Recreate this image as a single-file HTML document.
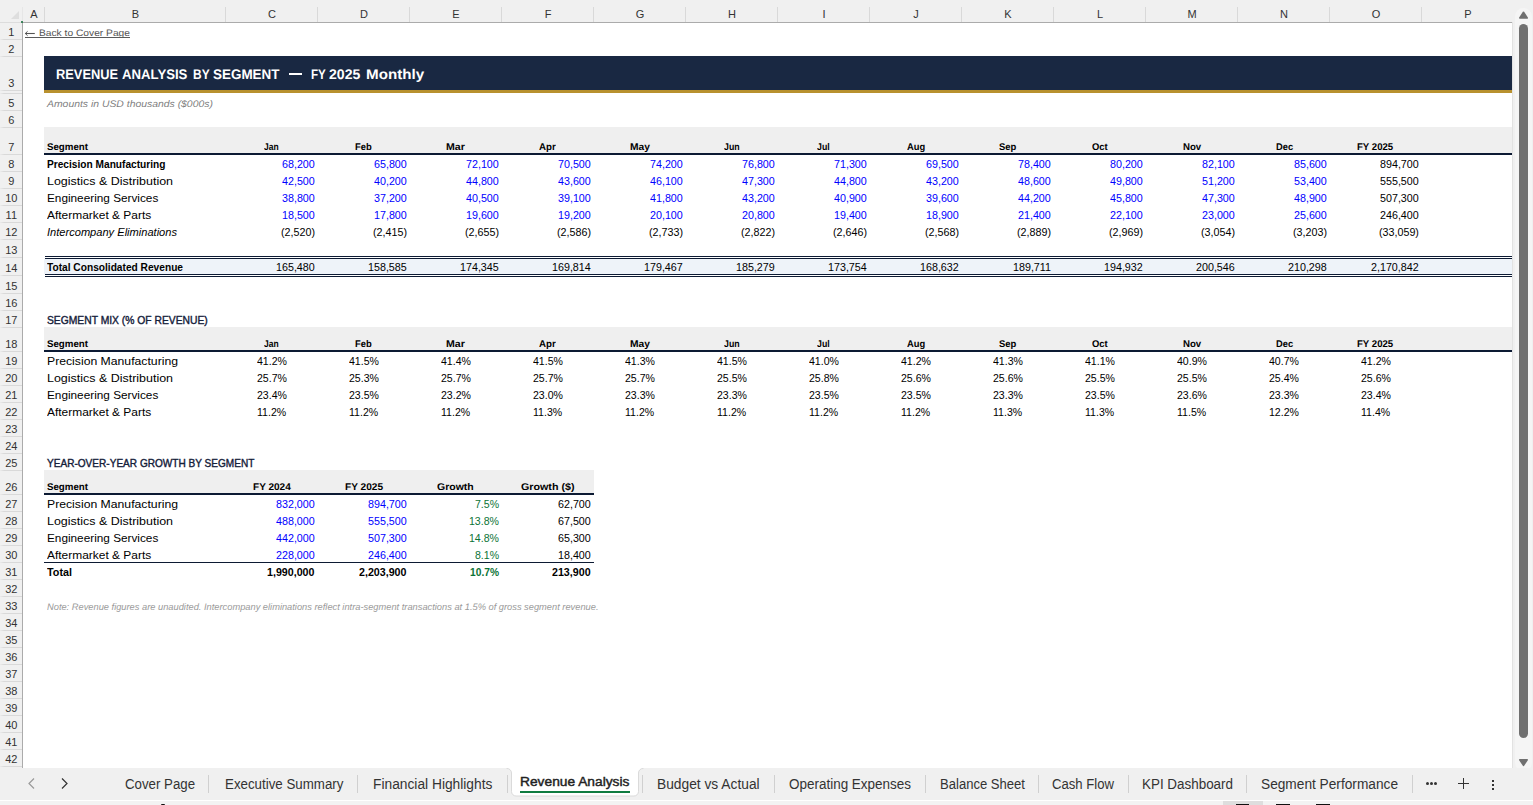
<!DOCTYPE html>
<html><head><meta charset="utf-8"><style>
html,body{margin:0;padding:0;}
body{width:1533px;height:805px;overflow:hidden;position:relative;background:#fff;font-family:"Liberation Sans",sans-serif;}
.t{position:absolute;white-space:pre;line-height:normal;transform-origin:0 0;}
.r{position:absolute;}
</style></head><body>
<div class="r" style="left:0px;top:0px;width:1533px;height:805px;background:#ffffff;"></div>
<div class="r" style="left:44px;top:56px;width:1468px;height:34px;background:#192842;"></div>
<div class="r" style="left:44px;top:90px;width:1468px;height:3px;background:#b8912f;"></div>
<div class="t" style="left:55.80px;top:66.33px;font-size:14px;font-weight:bold;color:#ffffff;transform:scaleX(0.9173);text-rendering:geometricPrecision;">REVENUE</div>
<div class="t" style="left:122.20px;top:66.33px;font-size:14px;font-weight:bold;color:#ffffff;transform:scaleX(0.9410);text-rendering:geometricPrecision;">ANALYSIS</div>
<div class="t" style="left:192.60px;top:66.33px;font-size:14px;font-weight:bold;color:#ffffff;transform:scaleX(0.8535);text-rendering:geometricPrecision;">BY</div>
<div class="t" style="left:213.10px;top:66.33px;font-size:14px;font-weight:bold;color:#ffffff;transform:scaleX(0.9603);text-rendering:geometricPrecision;">SEGMENT</div>
<div class="t" style="left:310.60px;top:66.33px;font-size:14px;font-weight:bold;color:#ffffff;transform:scaleX(0.8268);text-rendering:geometricPrecision;">FY</div>
<div class="t" style="left:329.30px;top:66.33px;font-size:14px;font-weight:bold;color:#ffffff;transform:scaleX(1.0048);text-rendering:geometricPrecision;">2025</div>
<div class="t" style="left:365.70px;top:66.33px;font-size:14px;font-weight:bold;color:#ffffff;transform:scaleX(1.0829);text-rendering:geometricPrecision;">Monthly</div>
<div class="r" style="left:289px;top:73.4px;width:13px;height:1.4px;background:#ffffff;"></div>
<div class="t" style="left:38.80px;top:27.49px;font-size:9.4px;font-weight:normal;font-style:normal;color:#555555;transform:scaleX(1.0909);text-rendering:geometricPrecision;">Back to Cover Page</div>
<div class="r" style="left:25px;top:37px;width:105px;height:1px;background:#5a5a5a;"></div>
<svg class="r" style="left:24px;top:29px" width="14" height="9"><path d="M1.2 4.5 L10.8 4.5" stroke="#555" stroke-width="1.1" fill="none"/><path d="M3.6 2.3 L1.3 4.5 L3.6 6.7" stroke="#555" stroke-width="1" fill="none"/></svg>
<div class="t" style="left:47.00px;top:99.31px;font-size:9.6px;font-weight:normal;font-style:italic;color:#7f7f7f;transform:scaleX(1.0839);text-rendering:geometricPrecision;">Amounts in USD thousands ($000s)</div>
<div class="r" style="left:44px;top:127px;width:1468px;height:26px;background:#efefef;"></div>
<div class="r" style="left:44px;top:153px;width:1468px;height:2px;background:#0c1a33;"></div>
<div class="t" style="left:47.00px;top:142.18px;font-size:9.75px;font-weight:bold;font-style:normal;color:#000000;transform:scaleX(0.9957);text-rendering:geometricPrecision;">Segment</div>
<div class="t" style="left:264.20px;top:142.18px;font-size:9.75px;font-weight:bold;color:#000000;transform:scaleX(0.8690);text-rendering:geometricPrecision;">Jan</div>
<div class="t" style="left:355.00px;top:142.18px;font-size:9.75px;font-weight:bold;color:#000000;transform:scaleX(0.9625);text-rendering:geometricPrecision;">Feb</div>
<div class="t" style="left:446.20px;top:142.18px;font-size:9.75px;font-weight:bold;color:#000000;transform:scaleX(1.0836);text-rendering:geometricPrecision;">Mar</div>
<div class="t" style="left:539.10px;top:142.18px;font-size:9.75px;font-weight:bold;color:#000000;transform:scaleX(0.9940);text-rendering:geometricPrecision;">Apr</div>
<div class="t" style="left:630.40px;top:142.18px;font-size:9.75px;font-weight:bold;color:#000000;transform:scaleX(1.0501);text-rendering:geometricPrecision;">May</div>
<div class="t" style="left:724.00px;top:142.18px;font-size:9.75px;font-weight:bold;color:#000000;transform:scaleX(0.8991);text-rendering:geometricPrecision;">Jun</div>
<div class="t" style="left:816.70px;top:142.18px;font-size:9.75px;font-weight:bold;color:#000000;transform:scaleX(0.9007);text-rendering:geometricPrecision;">Jul</div>
<div class="t" style="left:907.00px;top:142.18px;font-size:9.75px;font-weight:bold;color:#000000;transform:scaleX(0.9604);text-rendering:geometricPrecision;">Aug</div>
<div class="t" style="left:998.80px;top:142.18px;font-size:9.75px;font-weight:bold;color:#000000;transform:scaleX(0.9665);text-rendering:geometricPrecision;">Sep</div>
<div class="t" style="left:1092.30px;top:142.18px;font-size:9.75px;font-weight:bold;color:#000000;transform:scaleX(0.9662);text-rendering:geometricPrecision;">Oct</div>
<div class="t" style="left:1183.10px;top:142.18px;font-size:9.75px;font-weight:bold;color:#000000;transform:scaleX(0.9891);text-rendering:geometricPrecision;">Nov</div>
<div class="t" style="left:1275.60px;top:142.18px;font-size:9.75px;font-weight:bold;color:#000000;transform:scaleX(0.9553);text-rendering:geometricPrecision;">Dec</div>
<div class="t" style="left:1357.30px;top:142.18px;font-size:9.75px;font-weight:bold;color:#000000;transform:scaleX(0.9864);text-rendering:geometricPrecision;">FY 2025</div>
<div class="t" style="left:47.00px;top:158.04px;font-size:11px;font-weight:bold;font-style:normal;color:#000000;transform:scaleX(0.9232);">Precision Manufacturing</div>
<div class="t" style="left:281.70px;top:158.04px;font-size:11px;font-weight:normal;font-style:normal;color:#0000ff;transform:scaleX(0.9750);">68,200</div>
<div class="t" style="left:373.70px;top:158.04px;font-size:11px;font-weight:normal;font-style:normal;color:#0000ff;transform:scaleX(0.9750);">65,800</div>
<div class="t" style="left:465.70px;top:158.04px;font-size:11px;font-weight:normal;font-style:normal;color:#0000ff;transform:scaleX(0.9750);">72,100</div>
<div class="t" style="left:557.70px;top:158.04px;font-size:11px;font-weight:normal;font-style:normal;color:#0000ff;transform:scaleX(0.9750);">70,500</div>
<div class="t" style="left:649.70px;top:158.04px;font-size:11px;font-weight:normal;font-style:normal;color:#0000ff;transform:scaleX(0.9750);">74,200</div>
<div class="t" style="left:741.70px;top:158.04px;font-size:11px;font-weight:normal;font-style:normal;color:#0000ff;transform:scaleX(0.9750);">76,800</div>
<div class="t" style="left:833.70px;top:158.04px;font-size:11px;font-weight:normal;font-style:normal;color:#0000ff;transform:scaleX(0.9750);">71,300</div>
<div class="t" style="left:925.70px;top:158.04px;font-size:11px;font-weight:normal;font-style:normal;color:#0000ff;transform:scaleX(0.9750);">69,500</div>
<div class="t" style="left:1017.70px;top:158.04px;font-size:11px;font-weight:normal;font-style:normal;color:#0000ff;transform:scaleX(0.9750);">78,400</div>
<div class="t" style="left:1109.70px;top:158.04px;font-size:11px;font-weight:normal;font-style:normal;color:#0000ff;transform:scaleX(0.9750);">80,200</div>
<div class="t" style="left:1201.70px;top:158.04px;font-size:11px;font-weight:normal;font-style:normal;color:#0000ff;transform:scaleX(0.9750);">82,100</div>
<div class="t" style="left:1293.70px;top:158.04px;font-size:11px;font-weight:normal;font-style:normal;color:#0000ff;transform:scaleX(0.9750);">85,600</div>
<div class="t" style="left:1379.73px;top:158.04px;font-size:11px;font-weight:normal;font-style:normal;color:#000000;transform:scaleX(0.9750);">894,700</div>
<div class="t" style="left:47.00px;top:175.04px;font-size:11px;font-weight:normal;font-style:normal;color:#000000;transform:scaleX(1.1324);">Logistics &amp; Distribution</div>
<div class="t" style="left:281.70px;top:175.04px;font-size:11px;font-weight:normal;font-style:normal;color:#0000ff;transform:scaleX(0.9750);">42,500</div>
<div class="t" style="left:373.70px;top:175.04px;font-size:11px;font-weight:normal;font-style:normal;color:#0000ff;transform:scaleX(0.9750);">40,200</div>
<div class="t" style="left:465.70px;top:175.04px;font-size:11px;font-weight:normal;font-style:normal;color:#0000ff;transform:scaleX(0.9750);">44,800</div>
<div class="t" style="left:557.70px;top:175.04px;font-size:11px;font-weight:normal;font-style:normal;color:#0000ff;transform:scaleX(0.9750);">43,600</div>
<div class="t" style="left:649.70px;top:175.04px;font-size:11px;font-weight:normal;font-style:normal;color:#0000ff;transform:scaleX(0.9750);">46,100</div>
<div class="t" style="left:741.70px;top:175.04px;font-size:11px;font-weight:normal;font-style:normal;color:#0000ff;transform:scaleX(0.9750);">47,300</div>
<div class="t" style="left:833.70px;top:175.04px;font-size:11px;font-weight:normal;font-style:normal;color:#0000ff;transform:scaleX(0.9750);">44,800</div>
<div class="t" style="left:925.70px;top:175.04px;font-size:11px;font-weight:normal;font-style:normal;color:#0000ff;transform:scaleX(0.9750);">43,200</div>
<div class="t" style="left:1017.70px;top:175.04px;font-size:11px;font-weight:normal;font-style:normal;color:#0000ff;transform:scaleX(0.9750);">48,600</div>
<div class="t" style="left:1109.70px;top:175.04px;font-size:11px;font-weight:normal;font-style:normal;color:#0000ff;transform:scaleX(0.9750);">49,800</div>
<div class="t" style="left:1201.70px;top:175.04px;font-size:11px;font-weight:normal;font-style:normal;color:#0000ff;transform:scaleX(0.9750);">51,200</div>
<div class="t" style="left:1293.70px;top:175.04px;font-size:11px;font-weight:normal;font-style:normal;color:#0000ff;transform:scaleX(0.9750);">53,400</div>
<div class="t" style="left:1379.73px;top:175.04px;font-size:11px;font-weight:normal;font-style:normal;color:#000000;transform:scaleX(0.9750);">555,500</div>
<div class="t" style="left:47.00px;top:192.04px;font-size:11px;font-weight:normal;font-style:normal;color:#000000;transform:scaleX(1.0707);">Engineering Services</div>
<div class="t" style="left:281.70px;top:192.04px;font-size:11px;font-weight:normal;font-style:normal;color:#0000ff;transform:scaleX(0.9750);">38,800</div>
<div class="t" style="left:373.70px;top:192.04px;font-size:11px;font-weight:normal;font-style:normal;color:#0000ff;transform:scaleX(0.9750);">37,200</div>
<div class="t" style="left:465.70px;top:192.04px;font-size:11px;font-weight:normal;font-style:normal;color:#0000ff;transform:scaleX(0.9750);">40,500</div>
<div class="t" style="left:557.70px;top:192.04px;font-size:11px;font-weight:normal;font-style:normal;color:#0000ff;transform:scaleX(0.9750);">39,100</div>
<div class="t" style="left:649.70px;top:192.04px;font-size:11px;font-weight:normal;font-style:normal;color:#0000ff;transform:scaleX(0.9750);">41,800</div>
<div class="t" style="left:741.70px;top:192.04px;font-size:11px;font-weight:normal;font-style:normal;color:#0000ff;transform:scaleX(0.9750);">43,200</div>
<div class="t" style="left:833.70px;top:192.04px;font-size:11px;font-weight:normal;font-style:normal;color:#0000ff;transform:scaleX(0.9750);">40,900</div>
<div class="t" style="left:925.70px;top:192.04px;font-size:11px;font-weight:normal;font-style:normal;color:#0000ff;transform:scaleX(0.9750);">39,600</div>
<div class="t" style="left:1017.70px;top:192.04px;font-size:11px;font-weight:normal;font-style:normal;color:#0000ff;transform:scaleX(0.9750);">44,200</div>
<div class="t" style="left:1109.70px;top:192.04px;font-size:11px;font-weight:normal;font-style:normal;color:#0000ff;transform:scaleX(0.9750);">45,800</div>
<div class="t" style="left:1201.70px;top:192.04px;font-size:11px;font-weight:normal;font-style:normal;color:#0000ff;transform:scaleX(0.9750);">47,300</div>
<div class="t" style="left:1293.70px;top:192.04px;font-size:11px;font-weight:normal;font-style:normal;color:#0000ff;transform:scaleX(0.9750);">48,900</div>
<div class="t" style="left:1379.73px;top:192.04px;font-size:11px;font-weight:normal;font-style:normal;color:#000000;transform:scaleX(0.9750);">507,300</div>
<div class="t" style="left:47.00px;top:209.04px;font-size:11px;font-weight:normal;font-style:normal;color:#000000;transform:scaleX(1.0857);">Aftermarket &amp; Parts</div>
<div class="t" style="left:281.70px;top:209.04px;font-size:11px;font-weight:normal;font-style:normal;color:#0000ff;transform:scaleX(0.9750);">18,500</div>
<div class="t" style="left:373.70px;top:209.04px;font-size:11px;font-weight:normal;font-style:normal;color:#0000ff;transform:scaleX(0.9750);">17,800</div>
<div class="t" style="left:465.70px;top:209.04px;font-size:11px;font-weight:normal;font-style:normal;color:#0000ff;transform:scaleX(0.9750);">19,600</div>
<div class="t" style="left:557.70px;top:209.04px;font-size:11px;font-weight:normal;font-style:normal;color:#0000ff;transform:scaleX(0.9750);">19,200</div>
<div class="t" style="left:649.70px;top:209.04px;font-size:11px;font-weight:normal;font-style:normal;color:#0000ff;transform:scaleX(0.9750);">20,100</div>
<div class="t" style="left:741.70px;top:209.04px;font-size:11px;font-weight:normal;font-style:normal;color:#0000ff;transform:scaleX(0.9750);">20,800</div>
<div class="t" style="left:833.70px;top:209.04px;font-size:11px;font-weight:normal;font-style:normal;color:#0000ff;transform:scaleX(0.9750);">19,400</div>
<div class="t" style="left:925.70px;top:209.04px;font-size:11px;font-weight:normal;font-style:normal;color:#0000ff;transform:scaleX(0.9750);">18,900</div>
<div class="t" style="left:1017.70px;top:209.04px;font-size:11px;font-weight:normal;font-style:normal;color:#0000ff;transform:scaleX(0.9750);">21,400</div>
<div class="t" style="left:1109.70px;top:209.04px;font-size:11px;font-weight:normal;font-style:normal;color:#0000ff;transform:scaleX(0.9750);">22,100</div>
<div class="t" style="left:1201.70px;top:209.04px;font-size:11px;font-weight:normal;font-style:normal;color:#0000ff;transform:scaleX(0.9750);">23,000</div>
<div class="t" style="left:1293.70px;top:209.04px;font-size:11px;font-weight:normal;font-style:normal;color:#0000ff;transform:scaleX(0.9750);">25,600</div>
<div class="t" style="left:1379.73px;top:209.04px;font-size:11px;font-weight:normal;font-style:normal;color:#000000;transform:scaleX(0.9750);">246,400</div>
<div class="t" style="left:47.00px;top:226.04px;font-size:11px;font-weight:normal;font-style:italic;color:#000000;transform:scaleX(1.0077);">Intercompany Eliminations</div>
<div class="t" style="left:280.52px;top:226.04px;font-size:11px;font-weight:normal;font-style:normal;color:#000000;transform:scaleX(0.9750);">(2,520)</div>
<div class="t" style="left:372.52px;top:226.04px;font-size:11px;font-weight:normal;font-style:normal;color:#000000;transform:scaleX(0.9750);">(2,415)</div>
<div class="t" style="left:464.52px;top:226.04px;font-size:11px;font-weight:normal;font-style:normal;color:#000000;transform:scaleX(0.9750);">(2,655)</div>
<div class="t" style="left:556.52px;top:226.04px;font-size:11px;font-weight:normal;font-style:normal;color:#000000;transform:scaleX(0.9750);">(2,586)</div>
<div class="t" style="left:648.52px;top:226.04px;font-size:11px;font-weight:normal;font-style:normal;color:#000000;transform:scaleX(0.9750);">(2,733)</div>
<div class="t" style="left:740.52px;top:226.04px;font-size:11px;font-weight:normal;font-style:normal;color:#000000;transform:scaleX(0.9750);">(2,822)</div>
<div class="t" style="left:832.52px;top:226.04px;font-size:11px;font-weight:normal;font-style:normal;color:#000000;transform:scaleX(0.9750);">(2,646)</div>
<div class="t" style="left:924.52px;top:226.04px;font-size:11px;font-weight:normal;font-style:normal;color:#000000;transform:scaleX(0.9750);">(2,568)</div>
<div class="t" style="left:1016.52px;top:226.04px;font-size:11px;font-weight:normal;font-style:normal;color:#000000;transform:scaleX(0.9750);">(2,889)</div>
<div class="t" style="left:1108.52px;top:226.04px;font-size:11px;font-weight:normal;font-style:normal;color:#000000;transform:scaleX(0.9750);">(2,969)</div>
<div class="t" style="left:1200.52px;top:226.04px;font-size:11px;font-weight:normal;font-style:normal;color:#000000;transform:scaleX(0.9750);">(3,054)</div>
<div class="t" style="left:1292.52px;top:226.04px;font-size:11px;font-weight:normal;font-style:normal;color:#000000;transform:scaleX(0.9750);">(3,203)</div>
<div class="t" style="left:1378.55px;top:226.04px;font-size:11px;font-weight:normal;font-style:normal;color:#000000;transform:scaleX(0.9750);">(33,059)</div>
<div class="r" style="left:44px;top:259px;width:1468px;height:15px;background:#eef3f9;"></div>
<div class="r" style="left:45px;top:256px;width:1467px;height:1px;background:#0c1a33;"></div>
<div class="r" style="left:45px;top:258px;width:1467px;height:1px;background:#0c1a33;"></div>
<div class="r" style="left:45px;top:274px;width:1467px;height:1px;background:#0c1a33;"></div>
<div class="r" style="left:45px;top:276px;width:1467px;height:1px;background:#0c1a33;"></div>
<div class="t" style="left:47.00px;top:261.05px;font-size:11px;font-weight:bold;font-style:normal;color:#000000;transform:scaleX(0.9246);">Total Consolidated Revenue</div>
<div class="t" style="left:275.73px;top:261.05px;font-size:11px;font-weight:normal;font-style:normal;color:#000000;transform:scaleX(0.9750);">165,480</div>
<div class="t" style="left:367.73px;top:261.05px;font-size:11px;font-weight:normal;font-style:normal;color:#000000;transform:scaleX(0.9750);">158,585</div>
<div class="t" style="left:459.73px;top:261.05px;font-size:11px;font-weight:normal;font-style:normal;color:#000000;transform:scaleX(0.9750);">174,345</div>
<div class="t" style="left:551.73px;top:261.05px;font-size:11px;font-weight:normal;font-style:normal;color:#000000;transform:scaleX(0.9750);">169,814</div>
<div class="t" style="left:643.73px;top:261.05px;font-size:11px;font-weight:normal;font-style:normal;color:#000000;transform:scaleX(0.9750);">179,467</div>
<div class="t" style="left:735.73px;top:261.05px;font-size:11px;font-weight:normal;font-style:normal;color:#000000;transform:scaleX(0.9750);">185,279</div>
<div class="t" style="left:827.73px;top:261.05px;font-size:11px;font-weight:normal;font-style:normal;color:#000000;transform:scaleX(0.9750);">173,754</div>
<div class="t" style="left:919.73px;top:261.05px;font-size:11px;font-weight:normal;font-style:normal;color:#000000;transform:scaleX(0.9750);">168,632</div>
<div class="t" style="left:1012.53px;top:261.05px;font-size:11px;font-weight:normal;font-style:normal;color:#000000;transform:scaleX(0.9750);">189,711</div>
<div class="t" style="left:1103.73px;top:261.05px;font-size:11px;font-weight:normal;font-style:normal;color:#000000;transform:scaleX(0.9750);">194,932</div>
<div class="t" style="left:1195.73px;top:261.05px;font-size:11px;font-weight:normal;font-style:normal;color:#000000;transform:scaleX(0.9750);">200,546</div>
<div class="t" style="left:1287.73px;top:261.05px;font-size:11px;font-weight:normal;font-style:normal;color:#000000;transform:scaleX(0.9750);">210,298</div>
<div class="t" style="left:1370.79px;top:261.05px;font-size:11px;font-weight:normal;font-style:normal;color:#000000;transform:scaleX(0.9750);">2,170,842</div>
<div class="t" style="left:47.00px;top:314.05px;font-size:11px;font-weight:normal;font-style:normal;color:#14203a;transform:scaleX(0.9368);-webkit-text-stroke:0.4px #14203a;">SEGMENT MIX (% OF REVENUE)</div>
<div class="r" style="left:44px;top:327px;width:1468px;height:23px;background:#efefef;"></div>
<div class="r" style="left:44px;top:350px;width:1468px;height:2px;background:#0c1a33;"></div>
<div class="t" style="left:47.00px;top:339.18px;font-size:9.75px;font-weight:bold;font-style:normal;color:#000000;transform:scaleX(0.9957);text-rendering:geometricPrecision;">Segment</div>
<div class="t" style="left:264.20px;top:339.18px;font-size:9.75px;font-weight:bold;color:#000000;transform:scaleX(0.8690);text-rendering:geometricPrecision;">Jan</div>
<div class="t" style="left:355.00px;top:339.18px;font-size:9.75px;font-weight:bold;color:#000000;transform:scaleX(0.9625);text-rendering:geometricPrecision;">Feb</div>
<div class="t" style="left:446.20px;top:339.18px;font-size:9.75px;font-weight:bold;color:#000000;transform:scaleX(1.0836);text-rendering:geometricPrecision;">Mar</div>
<div class="t" style="left:539.10px;top:339.18px;font-size:9.75px;font-weight:bold;color:#000000;transform:scaleX(0.9940);text-rendering:geometricPrecision;">Apr</div>
<div class="t" style="left:630.40px;top:339.18px;font-size:9.75px;font-weight:bold;color:#000000;transform:scaleX(1.0501);text-rendering:geometricPrecision;">May</div>
<div class="t" style="left:724.00px;top:339.18px;font-size:9.75px;font-weight:bold;color:#000000;transform:scaleX(0.8991);text-rendering:geometricPrecision;">Jun</div>
<div class="t" style="left:816.70px;top:339.18px;font-size:9.75px;font-weight:bold;color:#000000;transform:scaleX(0.9007);text-rendering:geometricPrecision;">Jul</div>
<div class="t" style="left:907.00px;top:339.18px;font-size:9.75px;font-weight:bold;color:#000000;transform:scaleX(0.9604);text-rendering:geometricPrecision;">Aug</div>
<div class="t" style="left:998.80px;top:339.18px;font-size:9.75px;font-weight:bold;color:#000000;transform:scaleX(0.9665);text-rendering:geometricPrecision;">Sep</div>
<div class="t" style="left:1092.30px;top:339.18px;font-size:9.75px;font-weight:bold;color:#000000;transform:scaleX(0.9662);text-rendering:geometricPrecision;">Oct</div>
<div class="t" style="left:1183.10px;top:339.18px;font-size:9.75px;font-weight:bold;color:#000000;transform:scaleX(0.9891);text-rendering:geometricPrecision;">Nov</div>
<div class="t" style="left:1275.60px;top:339.18px;font-size:9.75px;font-weight:bold;color:#000000;transform:scaleX(0.9553);text-rendering:geometricPrecision;">Dec</div>
<div class="t" style="left:1357.30px;top:339.18px;font-size:9.75px;font-weight:bold;color:#000000;transform:scaleX(0.9864);text-rendering:geometricPrecision;">FY 2025</div>
<div class="t" style="left:47.00px;top:355.05px;font-size:11px;font-weight:normal;font-style:normal;color:#000000;transform:scaleX(1.1101);">Precision Manufacturing</div>
<div class="t" style="left:257.03px;top:355.05px;font-size:11px;font-weight:normal;font-style:normal;color:#000000;transform:scaleX(0.9600);">41.2%</div>
<div class="t" style="left:349.03px;top:355.05px;font-size:11px;font-weight:normal;font-style:normal;color:#000000;transform:scaleX(0.9600);">41.5%</div>
<div class="t" style="left:441.03px;top:355.05px;font-size:11px;font-weight:normal;font-style:normal;color:#000000;transform:scaleX(0.9600);">41.4%</div>
<div class="t" style="left:533.03px;top:355.05px;font-size:11px;font-weight:normal;font-style:normal;color:#000000;transform:scaleX(0.9600);">41.5%</div>
<div class="t" style="left:625.03px;top:355.05px;font-size:11px;font-weight:normal;font-style:normal;color:#000000;transform:scaleX(0.9600);">41.3%</div>
<div class="t" style="left:717.03px;top:355.05px;font-size:11px;font-weight:normal;font-style:normal;color:#000000;transform:scaleX(0.9600);">41.5%</div>
<div class="t" style="left:809.03px;top:355.05px;font-size:11px;font-weight:normal;font-style:normal;color:#000000;transform:scaleX(0.9600);">41.0%</div>
<div class="t" style="left:901.03px;top:355.05px;font-size:11px;font-weight:normal;font-style:normal;color:#000000;transform:scaleX(0.9600);">41.2%</div>
<div class="t" style="left:993.03px;top:355.05px;font-size:11px;font-weight:normal;font-style:normal;color:#000000;transform:scaleX(0.9600);">41.3%</div>
<div class="t" style="left:1085.03px;top:355.05px;font-size:11px;font-weight:normal;font-style:normal;color:#000000;transform:scaleX(0.9600);">41.1%</div>
<div class="t" style="left:1177.03px;top:355.05px;font-size:11px;font-weight:normal;font-style:normal;color:#000000;transform:scaleX(0.9600);">40.9%</div>
<div class="t" style="left:1269.03px;top:355.05px;font-size:11px;font-weight:normal;font-style:normal;color:#000000;transform:scaleX(0.9600);">40.7%</div>
<div class="t" style="left:1361.03px;top:355.05px;font-size:11px;font-weight:normal;font-style:normal;color:#000000;transform:scaleX(0.9600);">41.2%</div>
<div class="t" style="left:47.00px;top:372.05px;font-size:11px;font-weight:normal;font-style:normal;color:#000000;transform:scaleX(1.1324);">Logistics &amp; Distribution</div>
<div class="t" style="left:257.03px;top:372.05px;font-size:11px;font-weight:normal;font-style:normal;color:#000000;transform:scaleX(0.9600);">25.7%</div>
<div class="t" style="left:349.03px;top:372.05px;font-size:11px;font-weight:normal;font-style:normal;color:#000000;transform:scaleX(0.9600);">25.3%</div>
<div class="t" style="left:441.03px;top:372.05px;font-size:11px;font-weight:normal;font-style:normal;color:#000000;transform:scaleX(0.9600);">25.7%</div>
<div class="t" style="left:533.03px;top:372.05px;font-size:11px;font-weight:normal;font-style:normal;color:#000000;transform:scaleX(0.9600);">25.7%</div>
<div class="t" style="left:625.03px;top:372.05px;font-size:11px;font-weight:normal;font-style:normal;color:#000000;transform:scaleX(0.9600);">25.7%</div>
<div class="t" style="left:717.03px;top:372.05px;font-size:11px;font-weight:normal;font-style:normal;color:#000000;transform:scaleX(0.9600);">25.5%</div>
<div class="t" style="left:809.03px;top:372.05px;font-size:11px;font-weight:normal;font-style:normal;color:#000000;transform:scaleX(0.9600);">25.8%</div>
<div class="t" style="left:901.03px;top:372.05px;font-size:11px;font-weight:normal;font-style:normal;color:#000000;transform:scaleX(0.9600);">25.6%</div>
<div class="t" style="left:993.03px;top:372.05px;font-size:11px;font-weight:normal;font-style:normal;color:#000000;transform:scaleX(0.9600);">25.6%</div>
<div class="t" style="left:1085.03px;top:372.05px;font-size:11px;font-weight:normal;font-style:normal;color:#000000;transform:scaleX(0.9600);">25.5%</div>
<div class="t" style="left:1177.03px;top:372.05px;font-size:11px;font-weight:normal;font-style:normal;color:#000000;transform:scaleX(0.9600);">25.5%</div>
<div class="t" style="left:1269.03px;top:372.05px;font-size:11px;font-weight:normal;font-style:normal;color:#000000;transform:scaleX(0.9600);">25.4%</div>
<div class="t" style="left:1361.03px;top:372.05px;font-size:11px;font-weight:normal;font-style:normal;color:#000000;transform:scaleX(0.9600);">25.6%</div>
<div class="t" style="left:47.00px;top:389.05px;font-size:11px;font-weight:normal;font-style:normal;color:#000000;transform:scaleX(1.0707);">Engineering Services</div>
<div class="t" style="left:257.03px;top:389.05px;font-size:11px;font-weight:normal;font-style:normal;color:#000000;transform:scaleX(0.9600);">23.4%</div>
<div class="t" style="left:349.03px;top:389.05px;font-size:11px;font-weight:normal;font-style:normal;color:#000000;transform:scaleX(0.9600);">23.5%</div>
<div class="t" style="left:441.03px;top:389.05px;font-size:11px;font-weight:normal;font-style:normal;color:#000000;transform:scaleX(0.9600);">23.2%</div>
<div class="t" style="left:533.03px;top:389.05px;font-size:11px;font-weight:normal;font-style:normal;color:#000000;transform:scaleX(0.9600);">23.0%</div>
<div class="t" style="left:625.03px;top:389.05px;font-size:11px;font-weight:normal;font-style:normal;color:#000000;transform:scaleX(0.9600);">23.3%</div>
<div class="t" style="left:717.03px;top:389.05px;font-size:11px;font-weight:normal;font-style:normal;color:#000000;transform:scaleX(0.9600);">23.3%</div>
<div class="t" style="left:809.03px;top:389.05px;font-size:11px;font-weight:normal;font-style:normal;color:#000000;transform:scaleX(0.9600);">23.5%</div>
<div class="t" style="left:901.03px;top:389.05px;font-size:11px;font-weight:normal;font-style:normal;color:#000000;transform:scaleX(0.9600);">23.5%</div>
<div class="t" style="left:993.03px;top:389.05px;font-size:11px;font-weight:normal;font-style:normal;color:#000000;transform:scaleX(0.9600);">23.3%</div>
<div class="t" style="left:1085.03px;top:389.05px;font-size:11px;font-weight:normal;font-style:normal;color:#000000;transform:scaleX(0.9600);">23.5%</div>
<div class="t" style="left:1177.03px;top:389.05px;font-size:11px;font-weight:normal;font-style:normal;color:#000000;transform:scaleX(0.9600);">23.6%</div>
<div class="t" style="left:1269.03px;top:389.05px;font-size:11px;font-weight:normal;font-style:normal;color:#000000;transform:scaleX(0.9600);">23.3%</div>
<div class="t" style="left:1361.03px;top:389.05px;font-size:11px;font-weight:normal;font-style:normal;color:#000000;transform:scaleX(0.9600);">23.4%</div>
<div class="t" style="left:47.00px;top:406.05px;font-size:11px;font-weight:normal;font-style:normal;color:#000000;transform:scaleX(1.0857);">Aftermarket &amp; Parts</div>
<div class="t" style="left:257.42px;top:406.05px;font-size:11px;font-weight:normal;font-style:normal;color:#000000;transform:scaleX(0.9600);">11.2%</div>
<div class="t" style="left:349.42px;top:406.05px;font-size:11px;font-weight:normal;font-style:normal;color:#000000;transform:scaleX(0.9600);">11.2%</div>
<div class="t" style="left:441.42px;top:406.05px;font-size:11px;font-weight:normal;font-style:normal;color:#000000;transform:scaleX(0.9600);">11.2%</div>
<div class="t" style="left:533.42px;top:406.05px;font-size:11px;font-weight:normal;font-style:normal;color:#000000;transform:scaleX(0.9600);">11.3%</div>
<div class="t" style="left:625.42px;top:406.05px;font-size:11px;font-weight:normal;font-style:normal;color:#000000;transform:scaleX(0.9600);">11.2%</div>
<div class="t" style="left:717.42px;top:406.05px;font-size:11px;font-weight:normal;font-style:normal;color:#000000;transform:scaleX(0.9600);">11.2%</div>
<div class="t" style="left:809.42px;top:406.05px;font-size:11px;font-weight:normal;font-style:normal;color:#000000;transform:scaleX(0.9600);">11.2%</div>
<div class="t" style="left:901.42px;top:406.05px;font-size:11px;font-weight:normal;font-style:normal;color:#000000;transform:scaleX(0.9600);">11.2%</div>
<div class="t" style="left:993.42px;top:406.05px;font-size:11px;font-weight:normal;font-style:normal;color:#000000;transform:scaleX(0.9600);">11.3%</div>
<div class="t" style="left:1085.42px;top:406.05px;font-size:11px;font-weight:normal;font-style:normal;color:#000000;transform:scaleX(0.9600);">11.3%</div>
<div class="t" style="left:1177.42px;top:406.05px;font-size:11px;font-weight:normal;font-style:normal;color:#000000;transform:scaleX(0.9600);">11.5%</div>
<div class="t" style="left:1269.03px;top:406.05px;font-size:11px;font-weight:normal;font-style:normal;color:#000000;transform:scaleX(0.9600);">12.2%</div>
<div class="t" style="left:1361.42px;top:406.05px;font-size:11px;font-weight:normal;font-style:normal;color:#000000;transform:scaleX(0.9600);">11.4%</div>
<div class="t" style="left:47.00px;top:457.05px;font-size:11px;font-weight:normal;font-style:normal;color:#14203a;transform:scaleX(0.9155);-webkit-text-stroke:0.4px #14203a;">YEAR-OVER-YEAR GROWTH BY SEGMENT</div>
<div class="r" style="left:44px;top:470px;width:550px;height:23px;background:#efefef;"></div>
<div class="r" style="left:44px;top:493px;width:550px;height:2px;background:#0c1a33;"></div>
<div class="t" style="left:47.00px;top:482.18px;font-size:9.75px;font-weight:bold;font-style:normal;color:#000000;transform:scaleX(0.9957);text-rendering:geometricPrecision;">Segment</div>
<div class="t" style="left:252.90px;top:482.18px;font-size:9.75px;font-weight:bold;color:#000000;transform:scaleX(1.0300);text-rendering:geometricPrecision;">FY 2024</div>
<div class="t" style="left:344.60px;top:482.18px;font-size:9.75px;font-weight:bold;color:#000000;transform:scaleX(1.0381);text-rendering:geometricPrecision;">FY 2025</div>
<div class="t" style="left:437.30px;top:482.18px;font-size:9.75px;font-weight:bold;color:#000000;transform:scaleX(1.0762);text-rendering:geometricPrecision;">Growth</div>
<div class="t" style="left:521.00px;top:482.18px;font-size:9.75px;font-weight:bold;color:#000000;transform:scaleX(1.0974);text-rendering:geometricPrecision;">Growth ($)</div>
<div class="t" style="left:47.00px;top:498.05px;font-size:11px;font-weight:normal;font-style:normal;color:#000000;transform:scaleX(1.1101);">Precision Manufacturing</div>
<div class="t" style="left:275.73px;top:498.05px;font-size:11px;font-weight:normal;font-style:normal;color:#0000ff;transform:scaleX(0.9750);">832,000</div>
<div class="t" style="left:367.73px;top:498.05px;font-size:11px;font-weight:normal;font-style:normal;color:#0000ff;transform:scaleX(0.9750);">894,700</div>
<div class="t" style="left:475.13px;top:498.05px;font-size:11px;font-weight:normal;font-style:normal;color:#0b7336;transform:scaleX(0.9600);">7.5%</div>
<div class="t" style="left:557.70px;top:498.05px;font-size:11px;font-weight:normal;font-style:normal;color:#000000;transform:scaleX(0.9750);">62,700</div>
<div class="t" style="left:47.00px;top:515.04px;font-size:11px;font-weight:normal;font-style:normal;color:#000000;transform:scaleX(1.1324);">Logistics &amp; Distribution</div>
<div class="t" style="left:275.73px;top:515.04px;font-size:11px;font-weight:normal;font-style:normal;color:#0000ff;transform:scaleX(0.9750);">488,000</div>
<div class="t" style="left:367.73px;top:515.04px;font-size:11px;font-weight:normal;font-style:normal;color:#0000ff;transform:scaleX(0.9750);">555,500</div>
<div class="t" style="left:469.26px;top:515.04px;font-size:11px;font-weight:normal;font-style:normal;color:#0b7336;transform:scaleX(0.9600);">13.8%</div>
<div class="t" style="left:557.70px;top:515.04px;font-size:11px;font-weight:normal;font-style:normal;color:#000000;transform:scaleX(0.9750);">67,500</div>
<div class="t" style="left:47.00px;top:532.04px;font-size:11px;font-weight:normal;font-style:normal;color:#000000;transform:scaleX(1.0707);">Engineering Services</div>
<div class="t" style="left:275.73px;top:532.04px;font-size:11px;font-weight:normal;font-style:normal;color:#0000ff;transform:scaleX(0.9750);">442,000</div>
<div class="t" style="left:367.73px;top:532.04px;font-size:11px;font-weight:normal;font-style:normal;color:#0000ff;transform:scaleX(0.9750);">507,300</div>
<div class="t" style="left:469.26px;top:532.04px;font-size:11px;font-weight:normal;font-style:normal;color:#0b7336;transform:scaleX(0.9600);">14.8%</div>
<div class="t" style="left:557.70px;top:532.04px;font-size:11px;font-weight:normal;font-style:normal;color:#000000;transform:scaleX(0.9750);">65,300</div>
<div class="t" style="left:47.00px;top:549.04px;font-size:11px;font-weight:normal;font-style:normal;color:#000000;transform:scaleX(1.0857);">Aftermarket &amp; Parts</div>
<div class="t" style="left:275.73px;top:549.04px;font-size:11px;font-weight:normal;font-style:normal;color:#0000ff;transform:scaleX(0.9750);">228,000</div>
<div class="t" style="left:367.73px;top:549.04px;font-size:11px;font-weight:normal;font-style:normal;color:#0000ff;transform:scaleX(0.9750);">246,400</div>
<div class="t" style="left:475.13px;top:549.04px;font-size:11px;font-weight:normal;font-style:normal;color:#0b7336;transform:scaleX(0.9600);">8.1%</div>
<div class="t" style="left:557.70px;top:549.04px;font-size:11px;font-weight:normal;font-style:normal;color:#000000;transform:scaleX(0.9750);">18,400</div>
<div class="r" style="left:44px;top:562px;width:550px;height:1px;background:#0c1a33;"></div>
<div class="t" style="left:47.00px;top:566.04px;font-size:11px;font-weight:bold;font-style:normal;color:#000000;transform:scaleX(0.9819);">Total</div>
<div class="t" style="left:267.03px;top:566.04px;font-size:11px;font-weight:bold;font-style:normal;color:#000000;transform:scaleX(0.9700);">1,990,000</div>
<div class="t" style="left:359.03px;top:566.04px;font-size:11px;font-weight:bold;font-style:normal;color:#000000;transform:scaleX(0.9700);">2,203,900</div>
<div class="t" style="left:470.19px;top:566.04px;font-size:11px;font-weight:bold;font-style:normal;color:#0b7336;transform:scaleX(0.9300);">10.7%</div>
<div class="t" style="left:551.93px;top:566.04px;font-size:11px;font-weight:bold;font-style:normal;color:#000000;transform:scaleX(0.9700);">213,900</div>
<div class="t" style="left:47.00px;top:601.49px;font-size:9.4px;font-weight:normal;font-style:italic;color:#9a9a9a;transform:scaleX(0.9909);text-rendering:geometricPrecision;">Note: Revenue figures are unaudited. Intercompany eliminations reflect intra-segment transactions at 1.5% of gross segment revenue.</div>
<div class="r" style="left:0px;top:0px;width:1512px;height:22px;background:#f0f0f0;"></div>
<div class="r" style="left:0px;top:22px;width:1512px;height:1px;background:#ababab;"></div>
<div class="r" style="left:0px;top:0px;width:22px;height:768px;background:#f0f0f0;"></div>
<div class="r" style="left:22px;top:22px;width:1px;height:746px;background:#ababab;"></div>
<div class="r" style="left:22px;top:7px;width:1px;height:15px;background:#e6e6e6;"></div>
<div class="t" style="left:30.33px;top:8.04px;font-size:11px;font-weight:normal;font-style:normal;color:#333333;">A</div>
<div class="r" style="left:44px;top:7px;width:1px;height:15px;background:#d9d9d9;"></div>
<div class="t" style="left:131.83px;top:8.04px;font-size:11px;font-weight:normal;font-style:normal;color:#333333;">B</div>
<div class="r" style="left:225px;top:7px;width:1px;height:15px;background:#d9d9d9;"></div>
<div class="t" style="left:268.03px;top:8.04px;font-size:11px;font-weight:normal;font-style:normal;color:#333333;">C</div>
<div class="r" style="left:317px;top:7px;width:1px;height:15px;background:#d9d9d9;"></div>
<div class="t" style="left:360.03px;top:8.04px;font-size:11px;font-weight:normal;font-style:normal;color:#333333;">D</div>
<div class="r" style="left:409px;top:7px;width:1px;height:15px;background:#d9d9d9;"></div>
<div class="t" style="left:452.33px;top:8.04px;font-size:11px;font-weight:normal;font-style:normal;color:#333333;">E</div>
<div class="r" style="left:501px;top:7px;width:1px;height:15px;background:#d9d9d9;"></div>
<div class="t" style="left:544.64px;top:8.04px;font-size:11px;font-weight:normal;font-style:normal;color:#333333;">F</div>
<div class="r" style="left:593px;top:7px;width:1px;height:15px;background:#d9d9d9;"></div>
<div class="t" style="left:635.72px;top:8.04px;font-size:11px;font-weight:normal;font-style:normal;color:#333333;">G</div>
<div class="r" style="left:685px;top:7px;width:1px;height:15px;background:#d9d9d9;"></div>
<div class="t" style="left:728.03px;top:8.04px;font-size:11px;font-weight:normal;font-style:normal;color:#333333;">H</div>
<div class="r" style="left:777px;top:7px;width:1px;height:15px;background:#d9d9d9;"></div>
<div class="t" style="left:822.47px;top:8.04px;font-size:11px;font-weight:normal;font-style:normal;color:#333333;">I</div>
<div class="r" style="left:869px;top:7px;width:1px;height:15px;background:#d9d9d9;"></div>
<div class="t" style="left:913.25px;top:8.04px;font-size:11px;font-weight:normal;font-style:normal;color:#333333;">J</div>
<div class="r" style="left:961px;top:7px;width:1px;height:15px;background:#d9d9d9;"></div>
<div class="t" style="left:1004.33px;top:8.04px;font-size:11px;font-weight:normal;font-style:normal;color:#333333;">K</div>
<div class="r" style="left:1053px;top:7px;width:1px;height:15px;background:#d9d9d9;"></div>
<div class="t" style="left:1096.94px;top:8.04px;font-size:11px;font-weight:normal;font-style:normal;color:#333333;">L</div>
<div class="r" style="left:1145px;top:7px;width:1px;height:15px;background:#d9d9d9;"></div>
<div class="t" style="left:1187.42px;top:8.04px;font-size:11px;font-weight:normal;font-style:normal;color:#333333;">M</div>
<div class="r" style="left:1237px;top:7px;width:1px;height:15px;background:#d9d9d9;"></div>
<div class="t" style="left:1280.03px;top:8.04px;font-size:11px;font-weight:normal;font-style:normal;color:#333333;">N</div>
<div class="r" style="left:1329px;top:7px;width:1px;height:15px;background:#d9d9d9;"></div>
<div class="t" style="left:1371.72px;top:8.04px;font-size:11px;font-weight:normal;font-style:normal;color:#333333;">O</div>
<div class="r" style="left:1421px;top:7px;width:1px;height:15px;background:#d9d9d9;"></div>
<div class="t" style="left:1464.33px;top:8.04px;font-size:11px;font-weight:normal;font-style:normal;color:#333333;">P</div>
<svg class="r" style="left:0;top:0" width="22" height="22"><path d="M19 11 L19 19 L11 19 Z" fill="#dedede"/></svg>
<div class="r" style="left:0px;top:22px;width:22px;height:1px;background:#dcdcdc;"></div>
<div class="r" style="left:21px;top:21px;width:1.5px;height:1.5px;background:#217346;border-radius:50%;"></div>
<div class="r" style="left:0px;top:39px;width:22px;height:1px;background:linear-gradient(to right,#ececec 0px,#d9d9d9 4px,#d9d9d9 100%);"></div>
<div class="t" style="left:8.24px;top:26.05px;font-size:11px;font-weight:normal;font-style:normal;color:#333333;">1</div>
<div class="r" style="left:0px;top:56px;width:22px;height:1px;background:linear-gradient(to right,#ececec 0px,#d9d9d9 4px,#d9d9d9 100%);"></div>
<div class="t" style="left:8.24px;top:43.05px;font-size:11px;font-weight:normal;font-style:normal;color:#333333;">2</div>
<div class="r" style="left:0px;top:90px;width:22px;height:1px;background:linear-gradient(to right,#ececec 0px,#d9d9d9 4px,#d9d9d9 100%);"></div>
<div class="t" style="left:8.24px;top:77.05px;font-size:11px;font-weight:normal;font-style:normal;color:#333333;">3</div>
<div class="r" style="left:0px;top:110px;width:22px;height:1px;background:linear-gradient(to right,#ececec 0px,#d9d9d9 4px,#d9d9d9 100%);"></div>
<div class="t" style="left:8.24px;top:97.05px;font-size:11px;font-weight:normal;font-style:normal;color:#333333;">5</div>
<div class="r" style="left:0px;top:127px;width:22px;height:1px;background:linear-gradient(to right,#ececec 0px,#d9d9d9 4px,#d9d9d9 100%);"></div>
<div class="t" style="left:8.24px;top:114.05px;font-size:11px;font-weight:normal;font-style:normal;color:#333333;">6</div>
<div class="r" style="left:0px;top:154px;width:22px;height:1px;background:linear-gradient(to right,#ececec 0px,#d9d9d9 4px,#d9d9d9 100%);"></div>
<div class="t" style="left:8.24px;top:141.04px;font-size:11px;font-weight:normal;font-style:normal;color:#333333;">7</div>
<div class="r" style="left:0px;top:171px;width:22px;height:1px;background:linear-gradient(to right,#ececec 0px,#d9d9d9 4px,#d9d9d9 100%);"></div>
<div class="t" style="left:8.24px;top:158.04px;font-size:11px;font-weight:normal;font-style:normal;color:#333333;">8</div>
<div class="r" style="left:0px;top:188px;width:22px;height:1px;background:linear-gradient(to right,#ececec 0px,#d9d9d9 4px,#d9d9d9 100%);"></div>
<div class="t" style="left:8.24px;top:175.04px;font-size:11px;font-weight:normal;font-style:normal;color:#333333;">9</div>
<div class="r" style="left:0px;top:205px;width:22px;height:1px;background:linear-gradient(to right,#ececec 0px,#d9d9d9 4px,#d9d9d9 100%);"></div>
<div class="t" style="left:5.18px;top:192.04px;font-size:11px;font-weight:normal;font-style:normal;color:#333333;">10</div>
<div class="r" style="left:0px;top:222px;width:22px;height:1px;background:linear-gradient(to right,#ececec 0px,#d9d9d9 4px,#d9d9d9 100%);"></div>
<div class="t" style="left:5.59px;top:209.04px;font-size:11px;font-weight:normal;font-style:normal;color:#333333;">11</div>
<div class="r" style="left:0px;top:239px;width:22px;height:1px;background:linear-gradient(to right,#ececec 0px,#d9d9d9 4px,#d9d9d9 100%);"></div>
<div class="t" style="left:5.18px;top:226.04px;font-size:11px;font-weight:normal;font-style:normal;color:#333333;">12</div>
<div class="r" style="left:0px;top:257px;width:22px;height:1px;background:linear-gradient(to right,#ececec 0px,#d9d9d9 4px,#d9d9d9 100%);"></div>
<div class="t" style="left:5.18px;top:244.04px;font-size:11px;font-weight:normal;font-style:normal;color:#333333;">13</div>
<div class="r" style="left:0px;top:275px;width:22px;height:1px;background:linear-gradient(to right,#ececec 0px,#d9d9d9 4px,#d9d9d9 100%);"></div>
<div class="t" style="left:5.18px;top:262.05px;font-size:11px;font-weight:normal;font-style:normal;color:#333333;">14</div>
<div class="r" style="left:0px;top:293px;width:22px;height:1px;background:linear-gradient(to right,#ececec 0px,#d9d9d9 4px,#d9d9d9 100%);"></div>
<div class="t" style="left:5.18px;top:280.05px;font-size:11px;font-weight:normal;font-style:normal;color:#333333;">15</div>
<div class="r" style="left:0px;top:310px;width:22px;height:1px;background:linear-gradient(to right,#ececec 0px,#d9d9d9 4px,#d9d9d9 100%);"></div>
<div class="t" style="left:5.18px;top:297.05px;font-size:11px;font-weight:normal;font-style:normal;color:#333333;">16</div>
<div class="r" style="left:0px;top:327px;width:22px;height:1px;background:linear-gradient(to right,#ececec 0px,#d9d9d9 4px,#d9d9d9 100%);"></div>
<div class="t" style="left:5.18px;top:314.05px;font-size:11px;font-weight:normal;font-style:normal;color:#333333;">17</div>
<div class="r" style="left:0px;top:351px;width:22px;height:1px;background:linear-gradient(to right,#ececec 0px,#d9d9d9 4px,#d9d9d9 100%);"></div>
<div class="t" style="left:5.18px;top:338.05px;font-size:11px;font-weight:normal;font-style:normal;color:#333333;">18</div>
<div class="r" style="left:0px;top:368px;width:22px;height:1px;background:linear-gradient(to right,#ececec 0px,#d9d9d9 4px,#d9d9d9 100%);"></div>
<div class="t" style="left:5.18px;top:355.05px;font-size:11px;font-weight:normal;font-style:normal;color:#333333;">19</div>
<div class="r" style="left:0px;top:385px;width:22px;height:1px;background:linear-gradient(to right,#ececec 0px,#d9d9d9 4px,#d9d9d9 100%);"></div>
<div class="t" style="left:5.18px;top:372.05px;font-size:11px;font-weight:normal;font-style:normal;color:#333333;">20</div>
<div class="r" style="left:0px;top:402px;width:22px;height:1px;background:linear-gradient(to right,#ececec 0px,#d9d9d9 4px,#d9d9d9 100%);"></div>
<div class="t" style="left:5.18px;top:389.05px;font-size:11px;font-weight:normal;font-style:normal;color:#333333;">21</div>
<div class="r" style="left:0px;top:419px;width:22px;height:1px;background:linear-gradient(to right,#ececec 0px,#d9d9d9 4px,#d9d9d9 100%);"></div>
<div class="t" style="left:5.18px;top:406.05px;font-size:11px;font-weight:normal;font-style:normal;color:#333333;">22</div>
<div class="r" style="left:0px;top:436px;width:22px;height:1px;background:linear-gradient(to right,#ececec 0px,#d9d9d9 4px,#d9d9d9 100%);"></div>
<div class="t" style="left:5.18px;top:423.05px;font-size:11px;font-weight:normal;font-style:normal;color:#333333;">23</div>
<div class="r" style="left:0px;top:453px;width:22px;height:1px;background:linear-gradient(to right,#ececec 0px,#d9d9d9 4px,#d9d9d9 100%);"></div>
<div class="t" style="left:5.18px;top:440.05px;font-size:11px;font-weight:normal;font-style:normal;color:#333333;">24</div>
<div class="r" style="left:0px;top:470px;width:22px;height:1px;background:linear-gradient(to right,#ececec 0px,#d9d9d9 4px,#d9d9d9 100%);"></div>
<div class="t" style="left:5.18px;top:457.05px;font-size:11px;font-weight:normal;font-style:normal;color:#333333;">25</div>
<div class="r" style="left:0px;top:494px;width:22px;height:1px;background:linear-gradient(to right,#ececec 0px,#d9d9d9 4px,#d9d9d9 100%);"></div>
<div class="t" style="left:5.18px;top:481.05px;font-size:11px;font-weight:normal;font-style:normal;color:#333333;">26</div>
<div class="r" style="left:0px;top:511px;width:22px;height:1px;background:linear-gradient(to right,#ececec 0px,#d9d9d9 4px,#d9d9d9 100%);"></div>
<div class="t" style="left:5.18px;top:498.05px;font-size:11px;font-weight:normal;font-style:normal;color:#333333;">27</div>
<div class="r" style="left:0px;top:528px;width:22px;height:1px;background:linear-gradient(to right,#ececec 0px,#d9d9d9 4px,#d9d9d9 100%);"></div>
<div class="t" style="left:5.18px;top:515.04px;font-size:11px;font-weight:normal;font-style:normal;color:#333333;">28</div>
<div class="r" style="left:0px;top:545px;width:22px;height:1px;background:linear-gradient(to right,#ececec 0px,#d9d9d9 4px,#d9d9d9 100%);"></div>
<div class="t" style="left:5.18px;top:532.04px;font-size:11px;font-weight:normal;font-style:normal;color:#333333;">29</div>
<div class="r" style="left:0px;top:562px;width:22px;height:1px;background:linear-gradient(to right,#ececec 0px,#d9d9d9 4px,#d9d9d9 100%);"></div>
<div class="t" style="left:5.18px;top:549.04px;font-size:11px;font-weight:normal;font-style:normal;color:#333333;">30</div>
<div class="r" style="left:0px;top:579px;width:22px;height:1px;background:linear-gradient(to right,#ececec 0px,#d9d9d9 4px,#d9d9d9 100%);"></div>
<div class="t" style="left:5.18px;top:566.04px;font-size:11px;font-weight:normal;font-style:normal;color:#333333;">31</div>
<div class="r" style="left:0px;top:596px;width:22px;height:1px;background:linear-gradient(to right,#ececec 0px,#d9d9d9 4px,#d9d9d9 100%);"></div>
<div class="t" style="left:5.18px;top:583.04px;font-size:11px;font-weight:normal;font-style:normal;color:#333333;">32</div>
<div class="r" style="left:0px;top:613px;width:22px;height:1px;background:linear-gradient(to right,#ececec 0px,#d9d9d9 4px,#d9d9d9 100%);"></div>
<div class="t" style="left:5.18px;top:600.04px;font-size:11px;font-weight:normal;font-style:normal;color:#333333;">33</div>
<div class="r" style="left:0px;top:630px;width:22px;height:1px;background:linear-gradient(to right,#ececec 0px,#d9d9d9 4px,#d9d9d9 100%);"></div>
<div class="t" style="left:5.18px;top:617.04px;font-size:11px;font-weight:normal;font-style:normal;color:#333333;">34</div>
<div class="r" style="left:0px;top:647px;width:22px;height:1px;background:linear-gradient(to right,#ececec 0px,#d9d9d9 4px,#d9d9d9 100%);"></div>
<div class="t" style="left:5.18px;top:634.04px;font-size:11px;font-weight:normal;font-style:normal;color:#333333;">35</div>
<div class="r" style="left:0px;top:664px;width:22px;height:1px;background:linear-gradient(to right,#ececec 0px,#d9d9d9 4px,#d9d9d9 100%);"></div>
<div class="t" style="left:5.18px;top:651.04px;font-size:11px;font-weight:normal;font-style:normal;color:#333333;">36</div>
<div class="r" style="left:0px;top:681px;width:22px;height:1px;background:linear-gradient(to right,#ececec 0px,#d9d9d9 4px,#d9d9d9 100%);"></div>
<div class="t" style="left:5.18px;top:668.04px;font-size:11px;font-weight:normal;font-style:normal;color:#333333;">37</div>
<div class="r" style="left:0px;top:698px;width:22px;height:1px;background:linear-gradient(to right,#ececec 0px,#d9d9d9 4px,#d9d9d9 100%);"></div>
<div class="t" style="left:5.18px;top:685.04px;font-size:11px;font-weight:normal;font-style:normal;color:#333333;">38</div>
<div class="r" style="left:0px;top:715px;width:22px;height:1px;background:linear-gradient(to right,#ececec 0px,#d9d9d9 4px,#d9d9d9 100%);"></div>
<div class="t" style="left:5.18px;top:702.04px;font-size:11px;font-weight:normal;font-style:normal;color:#333333;">39</div>
<div class="r" style="left:0px;top:732px;width:22px;height:1px;background:linear-gradient(to right,#ececec 0px,#d9d9d9 4px,#d9d9d9 100%);"></div>
<div class="t" style="left:5.18px;top:719.04px;font-size:11px;font-weight:normal;font-style:normal;color:#333333;">40</div>
<div class="r" style="left:0px;top:749px;width:22px;height:1px;background:linear-gradient(to right,#ececec 0px,#d9d9d9 4px,#d9d9d9 100%);"></div>
<div class="t" style="left:5.18px;top:736.04px;font-size:11px;font-weight:normal;font-style:normal;color:#333333;">41</div>
<div class="r" style="left:0px;top:766px;width:22px;height:1px;background:linear-gradient(to right,#ececec 0px,#d9d9d9 4px,#d9d9d9 100%);"></div>
<div class="t" style="left:5.18px;top:753.04px;font-size:11px;font-weight:normal;font-style:normal;color:#333333;">42</div>
<div class="r" style="left:0px;top:93px;width:22px;height:1px;background:linear-gradient(to right,#ececec 0px,#d9d9d9 4px,#d9d9d9 100%);"></div>
<div class="r" style="left:1512px;top:0px;width:21px;height:771px;background:#f0f0f0;"></div>
<div class="r" style="left:1512px;top:22px;width:1px;height:747px;background:#e2e2e2;"></div>
<div class="r" style="left:22px;top:768px;width:1491px;height:1px;background:#e2e2e2;"></div>
<div class="r" style="left:1515px;top:7.5px;width:17px;height:763px;background:#f5f5f5;border-radius:8.5px;"></div>
<svg class="r" style="left:1515px;top:0px" width="18" height="30"><path d="M4.8 18 L8.5 12.3 L12.2 18 Z" fill="#707070" stroke="#707070" stroke-width="1.6" stroke-linejoin="round"/></svg>
<svg class="r" style="left:1515px;top:750px" width="18" height="20"><path d="M4.8 9.8 L8.5 15.3 L12.2 9.8 Z" fill="#707070" stroke="#707070" stroke-width="1.6" stroke-linejoin="round"/></svg>
<div class="r" style="left:1519px;top:24px;width:9px;height:714px;background:#707070;border-radius:4.5px;"></div>
<div class="r" style="left:0px;top:768px;width:1533px;height:32px;background:#f0f0f0;"></div>
<div class="r" style="left:0px;top:800px;width:1533px;height:1px;background:#ffffff;"></div>
<div class="r" style="left:0px;top:801px;width:1533px;height:4px;background:#f3f3f3;"></div>
<div class="r" style="left:1223px;top:801px;width:40px;height:4px;background:#dedede;"></div>
<div class="r" style="left:1236px;top:804px;width:13px;height:1px;background:#111;"></div>
<div class="r" style="left:1276px;top:804px;width:14px;height:1px;background:#111;"></div>
<div class="r" style="left:1316px;top:804px;width:14px;height:1px;background:#111;"></div>
<div class="r" style="left:161px;top:804px;width:4px;height:1px;background:#111;border-radius:2px 2px 0 0;"></div>
<svg class="r" style="left:0px;top:768px" width="90" height="32"><path d="M34 10.5 L29 15.5 L34 20.5" fill="none" stroke="#9a9a9a" stroke-width="1.2"/><path d="M62 10.5 L67 15.5 L62 20.5" fill="none" stroke="#333" stroke-width="1.2"/></svg>
<svg class="r" style="left:0;top:0" width="1533" height="805"><path d="M506.5 768.5 A4.5 4.5 0 0 1 511.5 773 L511.5 791.5 A4.5 4.5 0 0 0 516 796 L634 796 A4.5 4.5 0 0 0 638.5 791.5 L638.5 773 A4.5 4.5 0 0 1 643.5 768.5 L643.5 767 L506.5 767 Z" fill="#ffffff"/><path d="M506.5 768.5 A4.5 4.5 0 0 1 511.5 773 L511.5 791.5 A4.5 4.5 0 0 0 516 796 L634 796 A4.5 4.5 0 0 0 638.5 791.5 L638.5 773 A4.5 4.5 0 0 1 643.5 768.5" fill="none" stroke="#dadada" stroke-width="1"/></svg>
<div class="t" style="left:125.00px;top:776.33px;font-size:14px;font-weight:normal;font-style:normal;color:#333333;transform:scaleX(0.9468);">Cover Page</div>
<div class="t" style="left:224.60px;top:776.33px;font-size:14px;font-weight:normal;font-style:normal;color:#333333;transform:scaleX(0.9511);">Executive Summary</div>
<div class="t" style="left:372.90px;top:776.33px;font-size:14px;font-weight:normal;font-style:normal;color:#333333;transform:scaleX(0.9836);">Financial Highlights</div>
<div class="t" style="left:520.00px;top:773.60px;font-size:13.7px;font-weight:normal;font-style:normal;color:#222222;transform:scaleX(1.0055);-webkit-text-stroke:0.45px #222;">Revenue Analysis</div>
<div class="r" style="left:520px;top:791px;width:109.5px;height:2px;background:#107c41;"></div>
<div class="t" style="left:657.40px;top:776.33px;font-size:14px;font-weight:normal;font-style:normal;color:#333333;transform:scaleX(0.9838);">Budget vs Actual</div>
<div class="t" style="left:789.00px;top:776.33px;font-size:14px;font-weight:normal;font-style:normal;color:#333333;transform:scaleX(0.9617);">Operating Expenses</div>
<div class="t" style="left:940.00px;top:776.33px;font-size:14px;font-weight:normal;font-style:normal;color:#333333;transform:scaleX(0.9334);">Balance Sheet</div>
<div class="t" style="left:1052.00px;top:776.33px;font-size:14px;font-weight:normal;font-style:normal;color:#333333;transform:scaleX(0.9376);">Cash Flow</div>
<div class="t" style="left:1142.00px;top:776.33px;font-size:14px;font-weight:normal;font-style:normal;color:#333333;transform:scaleX(0.9585);">KPI Dashboard</div>
<div class="t" style="left:1261.00px;top:776.33px;font-size:14px;font-weight:normal;font-style:normal;color:#333333;transform:scaleX(0.9781);">Segment Performance</div>
<div class="r" style="left:208px;top:775px;width:1px;height:18px;background:#d0d0d0;"></div>
<div class="r" style="left:357px;top:775px;width:1px;height:18px;background:#d0d0d0;"></div>
<div class="r" style="left:507px;top:775px;width:1px;height:18px;background:#d0d0d0;"></div>
<div class="r" style="left:642px;top:775px;width:1px;height:18px;background:#d0d0d0;"></div>
<div class="r" style="left:774px;top:775px;width:1px;height:18px;background:#d0d0d0;"></div>
<div class="r" style="left:925px;top:775px;width:1px;height:18px;background:#d0d0d0;"></div>
<div class="r" style="left:1038px;top:775px;width:1px;height:18px;background:#d0d0d0;"></div>
<div class="r" style="left:1128px;top:775px;width:1px;height:18px;background:#d0d0d0;"></div>
<div class="r" style="left:1246px;top:775px;width:1px;height:18px;background:#d0d0d0;"></div>
<div class="r" style="left:1412px;top:775px;width:1px;height:18px;background:#d0d0d0;"></div>
<div class="r" style="left:1426.0px;top:782px;width:3px;height:3px;border-radius:50%;background:#333"></div>
<div class="r" style="left:1430.0px;top:782px;width:3px;height:3px;border-radius:50%;background:#333"></div>
<div class="r" style="left:1434.0px;top:782px;width:3px;height:3px;border-radius:50%;background:#333"></div>
<div class="r" style="left:1458px;top:782.8px;width:11px;height:1.2px;background:#333;"></div>
<div class="r" style="left:1462.9px;top:778px;width:1.2px;height:11px;background:#333;"></div>
<div class="r" style="left:1492px;top:780px;width:2px;height:2px;background:#333;"></div>
<div class="r" style="left:1492px;top:784px;width:2px;height:2px;background:#333;"></div>
<div class="r" style="left:1492px;top:788px;width:2px;height:2px;background:#333;"></div>
</body></html>
